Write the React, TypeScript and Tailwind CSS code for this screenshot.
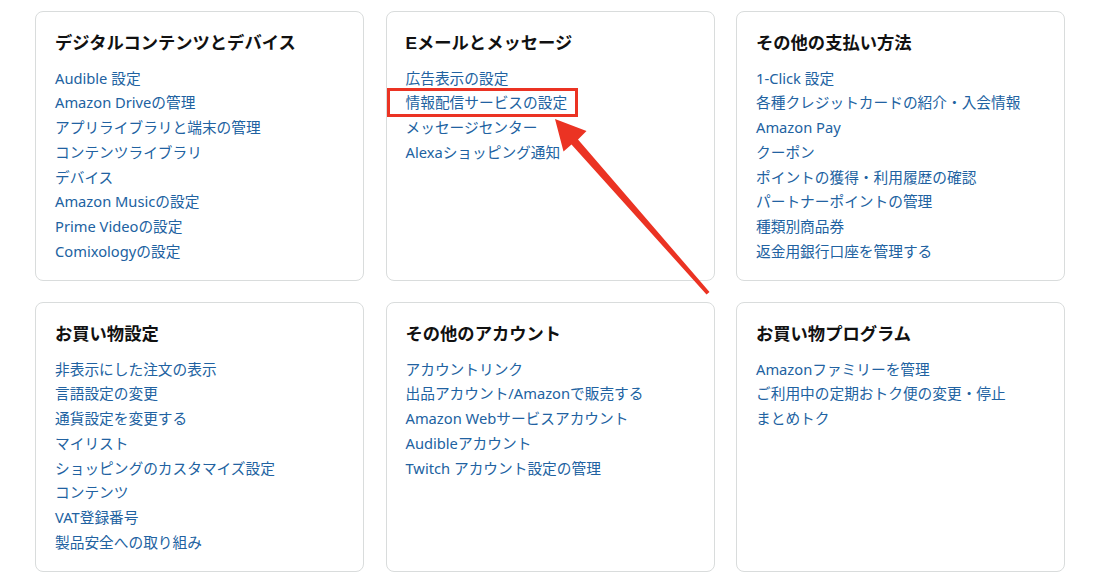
const SECTIONS = [
  {
    title: 'デジタルコンテンツとデバイス',
    links: [
      'Audible 設定',
      'Amazon Driveの管理',
      'アプリライブラリと端末の管理',
      'コンテンツライブラリ',
      'デバイス',
      'Amazon Musicの設定',
      'Prime Videoの設定',
      'Comixologyの設定',
    ],
  },
  {
    title: 'Eメールとメッセージ',
    links: ['広告表示の設定', '情報配信サービスの設定', 'メッセージセンター', 'Alexaショッピング通知'],
  },
  {
    title: 'その他の支払い方法',
    links: [
      '1-Click 設定',
      '各種クレジットカードの紹介・入会情報',
      'Amazon Pay',
      'クーポン',
      'ポイントの獲得・利用履歴の確認',
      'パートナーポイントの管理',
      '種類別商品券',
      '返金用銀行口座を管理する',
    ],
  },
  {
    title: 'お買い物設定',
    links: [
      '非表示にした注文の表示',
      '言語設定の変更',
      '通貨設定を変更する',
      'マイリスト',
      'ショッピングのカスタマイズ設定',
      'コンテンツ',
      'VAT登録番号',
      '製品安全への取り組み',
    ],
  },
  {
    title: 'その他のアカウント',
    links: [
      'アカウントリンク',
      '出品アカウント/Amazonで販売する',
      'Amazon Webサービスアカウント',
      'Audibleアカウント',
      'Twitch アカウント設定の管理',
    ],
  },
  {
    title: 'お買い物プログラム',
    links: ['Amazonファミリーを管理', 'ご利用中の定期おトク便の変更・停止', 'まとめトク'],
  },
];

function Card({ title, links }: { title: string; links: string[] }) {
  return (
    <div className="h-[270px] rounded-lg border border-[#d9dcdc] bg-white px-[19px] pt-[19px]">
      <h2 className="font-['Liberation_Sans','Noto_Sans_CJK_JP',sans-serif] text-[17.3px] font-bold leading-6 text-[#111]">
        {title}
      </h2>
      <ul className="mt-[10.5px]">
        {links.map((l) => (
          <li key={l} className="text-[14.7px] leading-[24.8px] text-[#2162a1] whitespace-nowrap">
            {l}
          </li>
        ))}
      </ul>
    </div>
  );
}

export default function App() {
  return (
    <div
      className="relative h-[587px] w-[1100px] overflow-hidden bg-white pl-[35px] pt-[11px]"
      style={{ fontFamily: '"Noto Sans", "Noto Sans CJK JP", sans-serif' }}
    >
      <div className="grid grid-cols-[329px_329px_329px] gap-x-[21.5px] gap-y-[21px]">
        {SECTIONS.map((s) => (
          <Card key={s.title} title={s.title} links={s.links} />
        ))}
      </div>

      {/* annotation: highlight box + arrow */}
      <svg className="pointer-events-none absolute left-0 top-0" width="1100" height="587">
        <rect x="388.5" y="89.5" width="188" height="26" fill="none" stroke="#eb3323" strokeWidth="3" />
        <polygon
          fill="#eb3323"
          points="555,119 586.5,131 578,139.5 709.5,292 706.5,294.5 571.5,144.5 563.5,151.5"
        />
      </svg>
    </div>
  );
}
